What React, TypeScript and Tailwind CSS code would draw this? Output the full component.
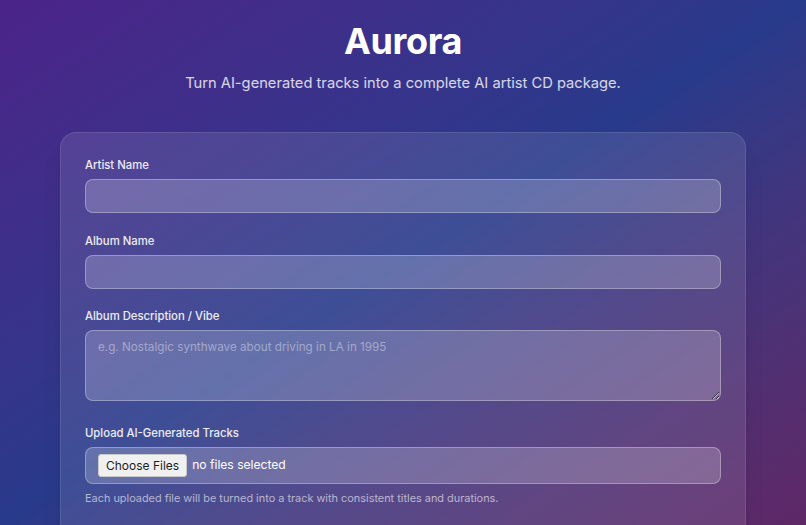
import React from "react";

function Label({ children }: { children: React.ReactNode }) {
  return (
    <label className="block text-[11.3px] leading-4 font-medium text-white/90 mb-1.5">
      {children}
    </label>
  );
}

export default function App() {
  return (
    <div className="h-screen overflow-hidden bg-gradient-to-br from-[#4b2389] via-[#283a8b] to-[#5f2766] text-white font-['Inter',sans-serif]">
      <div className="pt-[21px] flex flex-col items-center">
        <h1 className="text-[36px] leading-10 font-bold tracking-[-0.01em] text-white">Aurora</h1>
        <p className="mt-[11px] text-[14.7px] leading-[22px] text-white/80">
          Turn AI-generated tracks into a complete AI artist CD package.
        </p>
      </div>

      <div className="mx-auto mt-[38px] w-[686px] rounded-2xl border border-white/10 bg-white/10 px-6 pt-6 pb-8 shadow-xl">
        <div className="flex flex-col gap-5">
          <div>
            <Label>Artist Name</Label>
            <input
              type="text"
              className="block w-full h-[34px] rounded-lg border border-white/30 bg-white/20 px-3 text-[13px] text-white outline-none"
            />
          </div>
          <div>
            <Label>Album Name</Label>
            <input
              type="text"
              className="block w-full h-[34px] rounded-lg border border-white/30 bg-white/20 px-3 text-[13px] text-white outline-none"
            />
          </div>
          <div className="-mt-px">
            <Label>Album Description / Vibe</Label>
            <textarea
              placeholder="e.g. Nostalgic synthwave about driving in LA in 1995"
              className="block w-full h-[71px] rounded-lg border border-white/30 bg-white/20 px-3 pt-1.5 pb-2 text-[11.7px] leading-5 text-white placeholder:text-white/40 outline-none"
            />
          </div>
          <div className="mt-1">
            <Label>Upload AI-Generated Tracks</Label>
            <label className="flex items-center h-[37px] w-full rounded-lg border border-white/30 bg-white/20 px-3 cursor-pointer">
              <input type="file" multiple className="hidden" />
              <span className="inline-flex items-center h-[23px] px-[7px] rounded-[3px] border border-[#c9c9c9] bg-[#f0f0f0] text-[12px] text-[#1e1e1e]">
                Choose Files
              </span>
              <span className="ml-[5px] text-[12.1px] text-white">no files selected</span>
            </label>
            <p className="mt-[7px] text-[10.9px] leading-[14px] text-white/60">
              Each uploaded file will be turned into a track with consistent titles and durations.
            </p>
          </div>
        </div>
      </div>
    </div>
  );
}
